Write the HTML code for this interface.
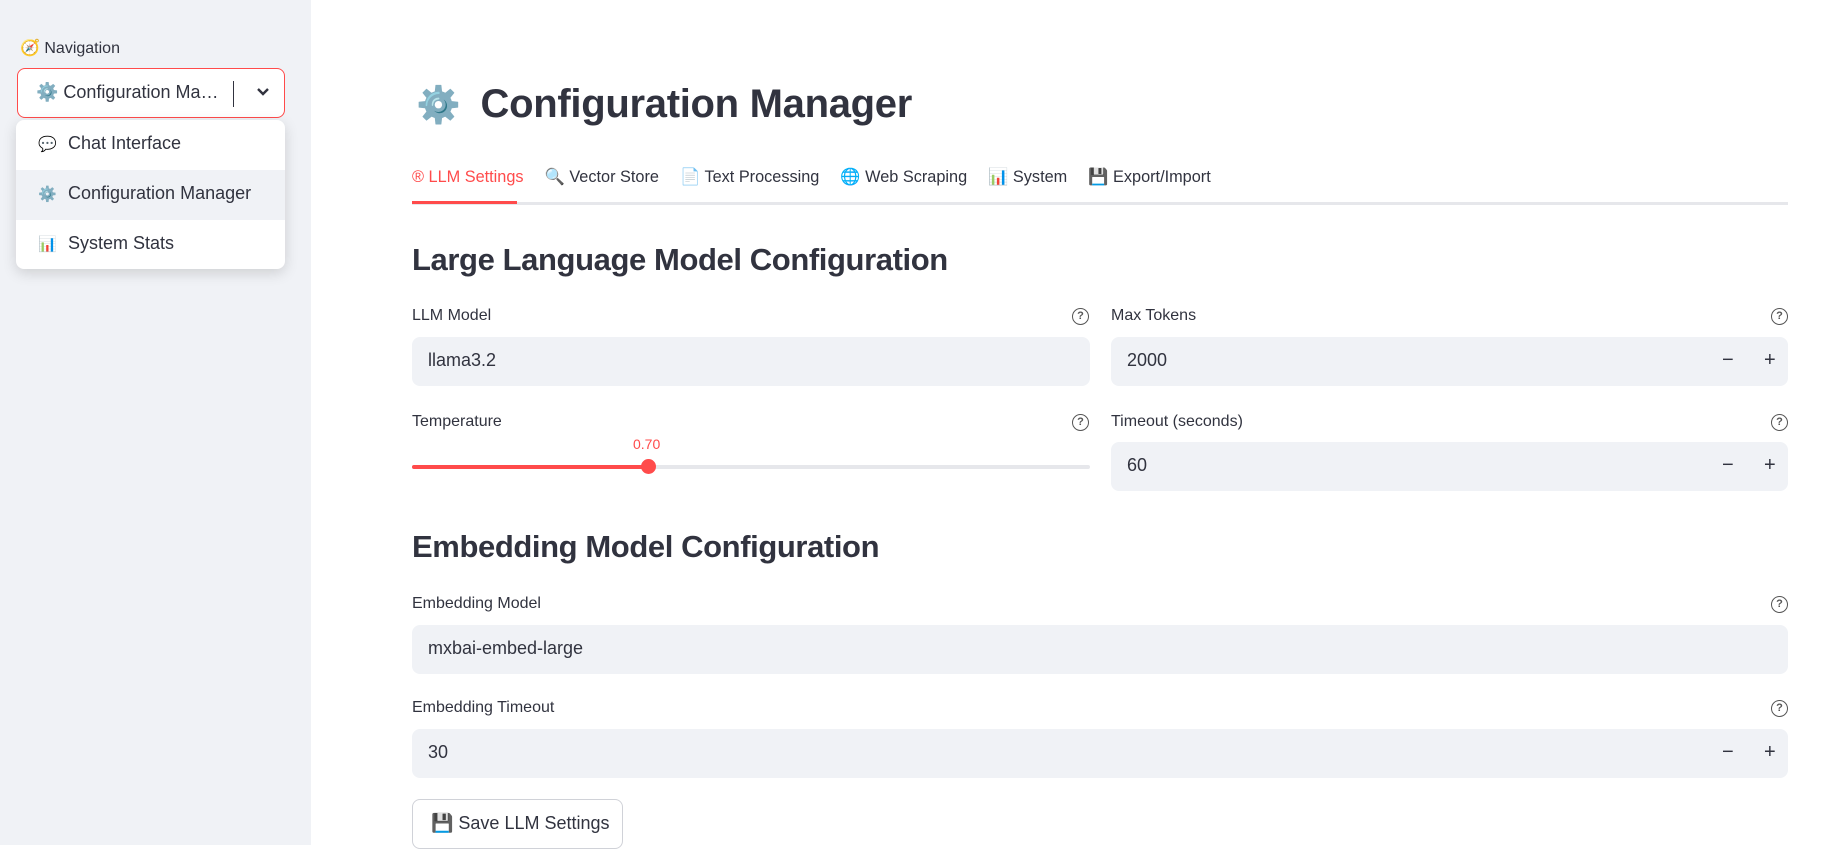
<!DOCTYPE html>
<html><head><meta charset="utf-8"><style>
*{box-sizing:border-box;margin:0;padding:0}
body{width:1823px;height:845px;overflow:hidden;background:#fff;font-family:"Liberation Sans","Noto Sans CJK SC",sans-serif;color:#31333f;position:relative}
.sb{position:absolute;left:0;top:0;width:311px;height:845px;background:#f0f2f6}
.abs{position:absolute}
.nav{left:20px;top:38px;font-size:16px;color:#31333f}
.sel{left:17px;top:68px;width:268px;height:50px;border:1px solid #ff4b4b;border-radius:8px;background:#fff;font-size:18px;padding:13px 0 0 18px;white-space:nowrap}
.sel .bar{position:absolute;left:215px;top:12px;width:1px;height:26px;background:#31333f}
.sel .chev{position:absolute;left:236px;top:14px}
.dd{left:16px;top:120px;width:269px;height:149px;background:#fff;border-radius:8px;box-shadow:0 4px 14px rgba(0,0,0,.15);overflow:hidden}
.it{height:50px;font-size:18px;padding:13px 0 0 22px;color:#31333f}
.it.hl{background:#f0f2f6}
.ic{display:inline-block;width:22px;margin-right:8px;font-size:15px}
.title{left:416px;top:82px;font-size:40px;font-weight:bold;color:#31333f;letter-spacing:-0.3px}
.tabs{left:412px;top:167px;font-size:16.3px;white-space:nowrap}
.tabs span{margin-right:21px}
.tl{left:412px;top:202px;width:1376px;height:3px;background:#e6e7eb}
.ta{left:412px;top:201px;width:105px;height:3px;background:#ff4b4b}
h2{position:absolute;font-size:31px;font-weight:bold;color:#31333f;left:412px;letter-spacing:-0.4px}
.lab{position:absolute;font-size:16px;color:#31333f}
.q{position:absolute;width:17px;height:17px;border:1.5px solid #555;border-radius:50%;font-size:11px;text-align:center;line-height:14px;color:#555;font-weight:bold}
.inp{position:absolute;background:#f0f2f6;border-radius:8px;height:49px;font-size:18px;padding:13px 0 0 16px;color:#31333f}
.pm{position:absolute;top:12px;font-size:20px;color:#31333f}
.btn{left:412px;top:799px;width:211px;height:50px;border:1px solid #d0d2d8;border-radius:8px;font-size:18px;padding:13px 0 0 18px;background:#fff}
</style></head><body>
<div class="sb"></div>
<div class="abs nav">🧭 Navigation</div>
<div class="abs sel">⚙️ Configuration Ma…<div class="bar"></div><svg class="chev" width="18" height="18" viewBox="0 0 18 18"><path d="M4 6l5 5 5-5" fill="none" stroke="#31333f" stroke-width="2.4"/></svg></div>
<div class="abs dd">
<div class="it"><span class="ic">💬</span>Chat Interface</div>
<div class="it hl"><span class="ic">⚙️</span>Configuration Manager</div>
<div class="it"><span class="ic">📊</span>System Stats</div>
</div>

<div class="abs title"><span style="font-size:36px;margin-right:20px">⚙️</span>Configuration Manager</div>
<div class="abs tabs"><span style="color:#ff4b4b">® LLM Settings</span><span>🔍 Vector Store</span><span>📄 Text Processing</span><span>🌐 Web Scraping</span><span>📊 System</span><span>💾 Export/Import</span></div>
<div class="abs tl"></div><div class="abs ta"></div>

<h2 style="top:242px">Large Language Model Configuration</h2>
<div class="lab" style="left:412px;top:307px">LLM Model</div><div class="q" style="left:1072px;top:308px">?</div>
<div class="lab" style="left:1111px;top:307px">Max Tokens</div><div class="q" style="left:1771px;top:308px">?</div>
<div class="inp" style="left:412px;top:337px;width:678px">llama3.2</div>
<div class="inp" style="left:1111px;top:337px;width:677px">2000<span class="pm" style="left:611px">−</span><span class="pm" style="left:653px">+</span></div>

<div class="lab" style="left:412px;top:413px">Temperature</div><div class="q" style="left:1072px;top:414px">?</div>
<div class="lab" style="left:1111px;top:413px">Timeout (seconds)</div><div class="q" style="left:1771px;top:414px">?</div>
<div class="abs" style="left:633px;top:436px;font-size:14px;color:#ff4b4b">0.70</div>
<div class="abs" style="left:412px;top:465px;width:678px;height:4px;background:#e6e7eb;border-radius:2px"></div>
<div class="abs" style="left:412px;top:465px;width:236px;height:4px;background:#ff4b4b;border-radius:2px"></div>
<div class="abs" style="left:641px;top:459px;width:15px;height:15px;background:#ff4b4b;border-radius:50%"></div>
<div class="inp" style="left:1111px;top:442px;width:677px">60<span class="pm" style="left:611px">−</span><span class="pm" style="left:653px">+</span></div>

<h2 style="top:529px">Embedding Model Configuration</h2>
<div class="lab" style="left:412px;top:595px">Embedding Model</div><div class="q" style="left:1771px;top:596px">?</div>
<div class="inp" style="left:412px;top:625px;width:1376px">mxbai-embed-large</div>
<div class="lab" style="left:412px;top:699px">Embedding Timeout</div><div class="q" style="left:1771px;top:700px">?</div>
<div class="inp" style="left:412px;top:729px;width:1376px">30<span class="pm" style="left:1310px">−</span><span class="pm" style="left:1352px">+</span></div>
<div class="abs btn">💾 Save LLM Settings</div>
</body></html>
